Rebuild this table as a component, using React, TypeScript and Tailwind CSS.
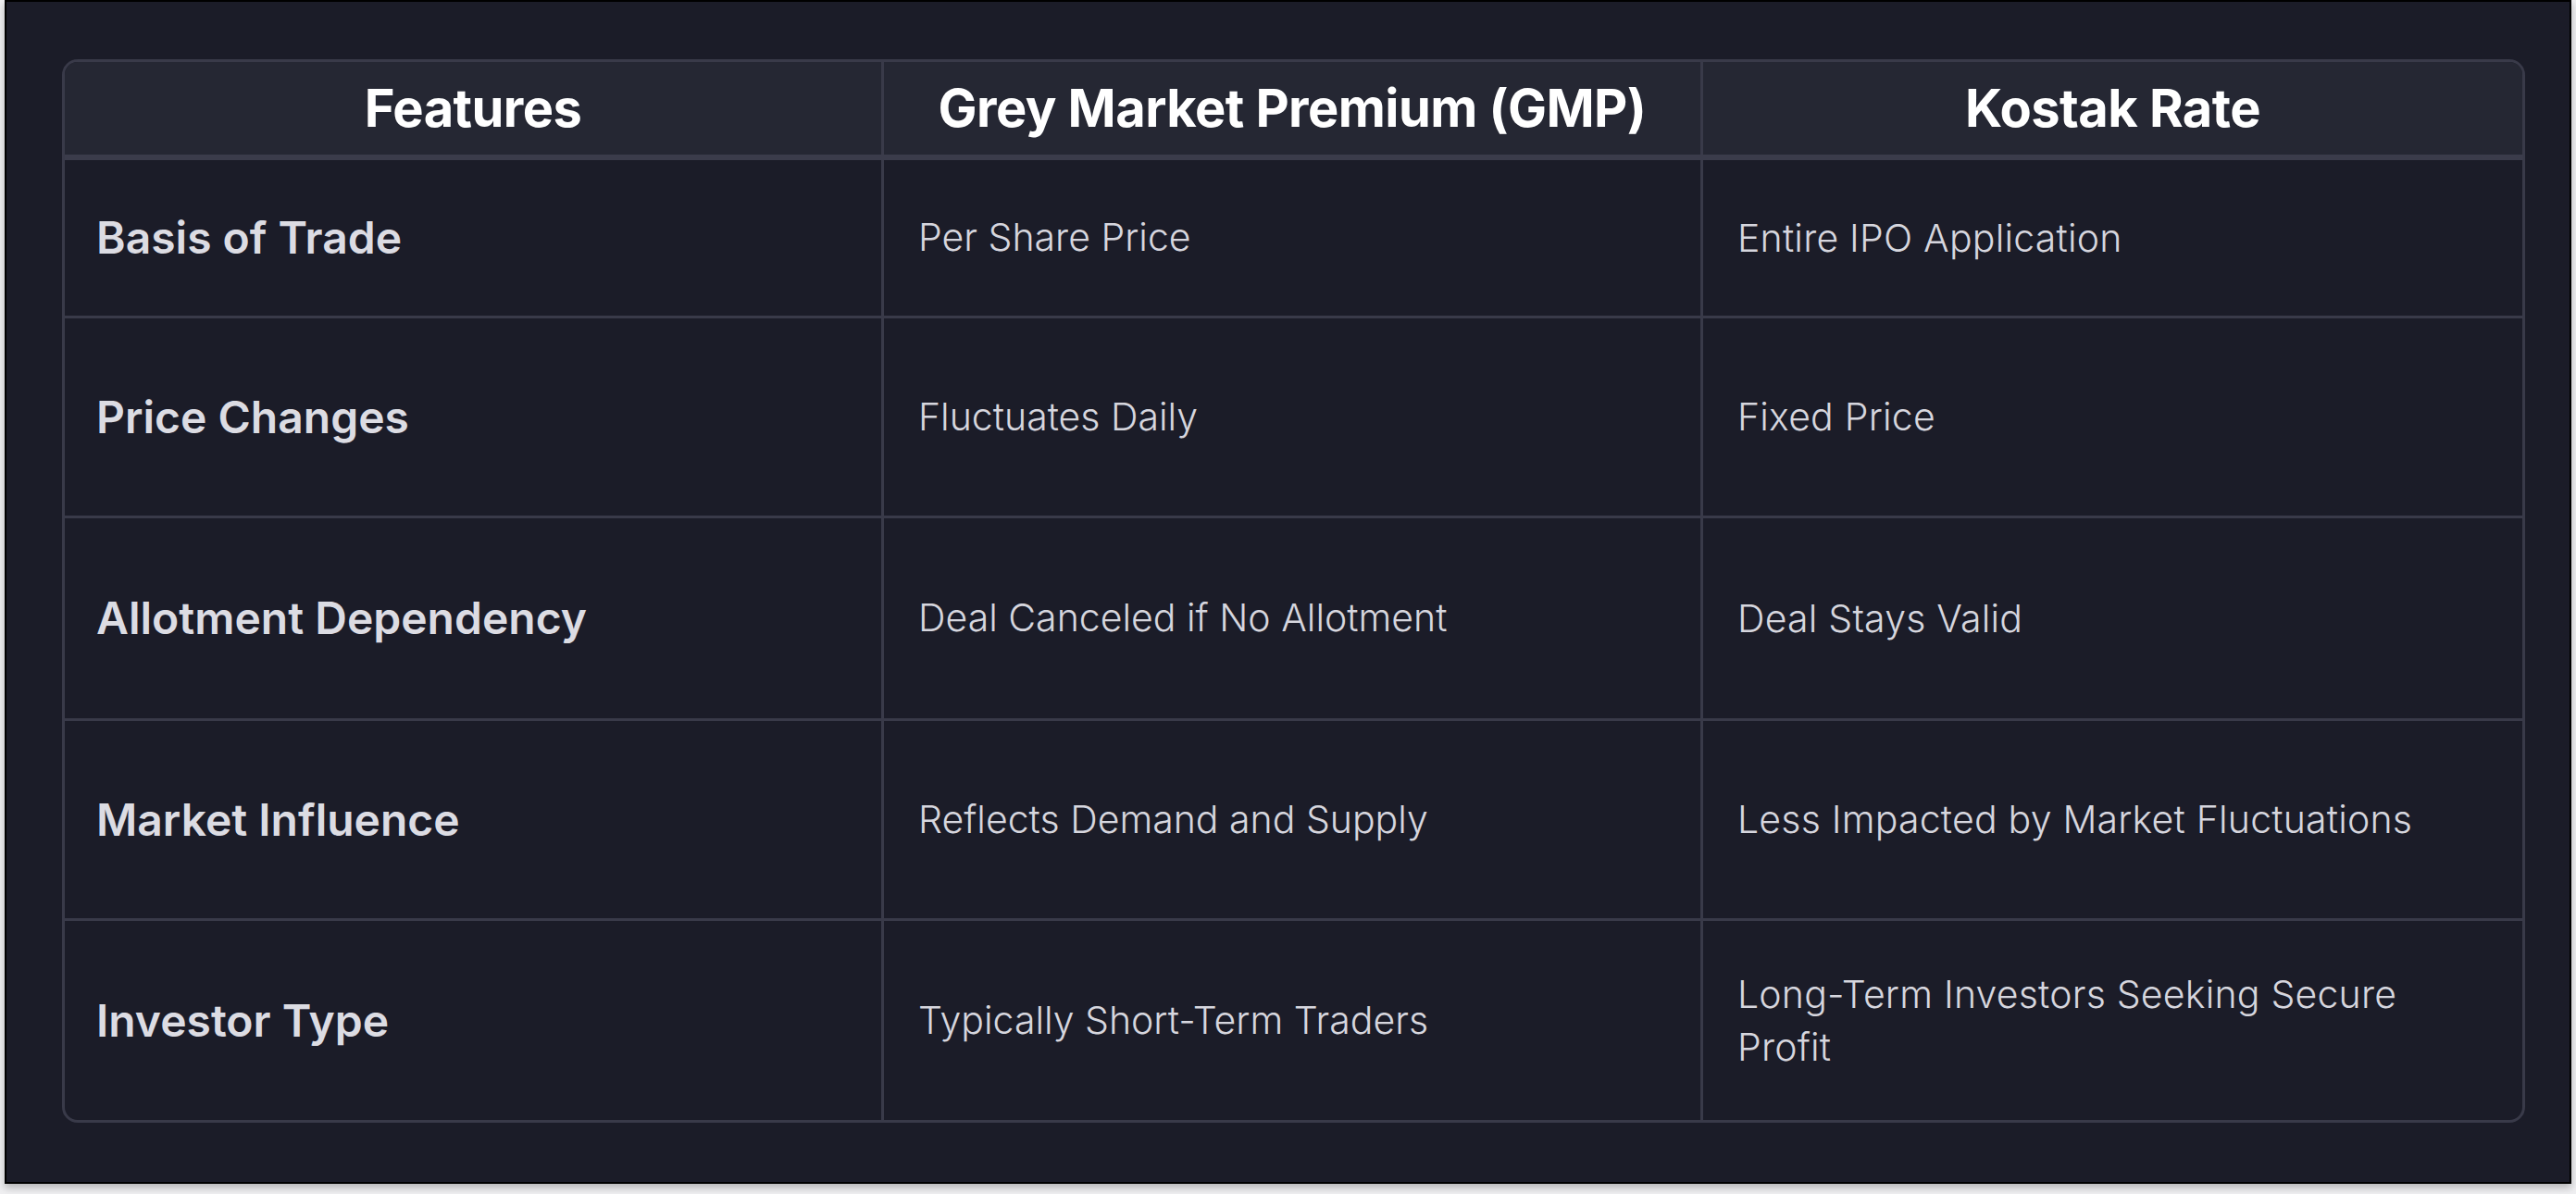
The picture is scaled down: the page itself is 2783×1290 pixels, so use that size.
import React from 'react'

// Comparison table: GMP vs Kostak rate

type Row = { feature: string; gmp: string; kostak: string; h: string }

const rows: Row[] = [
  { feature: 'Basis of Trade', gmp: 'Per Share Price', kostak: 'Entire IPO Application', h: 'h-[171px]' },
  { feature: 'Price Changes', gmp: 'Fluctuates Daily', kostak: 'Fixed Price', h: 'h-[216px]' },
  { feature: 'Allotment Dependency', gmp: 'Deal Canceled if No Allotment', kostak: 'Deal Stays Valid', h: 'h-[219px]' },
  { feature: 'Market Influence', gmp: 'Reflects Demand and Supply', kostak: 'Less Impacted by Market Fluctuations', h: 'h-[216px]' },
  { feature: 'Investor Type', gmp: 'Typically Short-Term Traders', kostak: 'Long-Term Investors Seeking Secure Profit', h: 'h-[215px]' },
]

export default function App() {
  return (
    <div className="w-[2783px] h-[1290px] bg-[#efeff1] font-['Inter','Liberation_Sans',sans-serif]">
      <div className="ml-[5px] w-[2773px] h-[1279px] border-2 border-black bg-[#1b1c28] pl-[60px] pt-[62px] shadow-[0_4px_8px_rgba(0,0,0,0.25)]">
        <div className="w-[2661px] rounded-[17px] border-[3px] border-[#393a49] overflow-hidden">
          {/* header */}
          <div className="grid grid-cols-3 h-[106px] bg-[#252733] border-b-[6px] border-[#3b3c4b] divide-x-[3px] divide-[#393a49]">
            {['Features', 'Grey Market Premium (GMP)', 'Kostak Rate'].map((t) => (
              <div key={t} className="flex items-center justify-center text-[56px] font-bold text-white tracking-[-0.01em]">
                {t}
              </div>
            ))}
          </div>

          {rows.map((r, i) => (
            <div
              key={r.feature}
              className={`grid grid-cols-3 ${r.h} divide-x-[3px] divide-[#393a49] ${i < rows.length - 1 ? 'border-b-[3px] border-[#393a49]' : ''}`}
            >
              <div className="flex items-center pl-[34px] pr-[36px] text-[48px] font-semibold text-[#dcdce3]">
                {r.feature}
              </div>
              <div className="flex items-center pl-[37px] pr-[36px] text-[41px] font-light text-[#d6d6de]">
                {r.gmp}
              </div>
              <div className="flex items-center pl-[37px] pr-[36px] text-[41px] leading-[57px] font-light text-[#d6d6de] tracking-[0.005em]">
                <span className="max-w-[740px]">{r.kostak}</span>
              </div>
            </div>
          ))}
        </div>
      </div>
    </div>
  )
}
